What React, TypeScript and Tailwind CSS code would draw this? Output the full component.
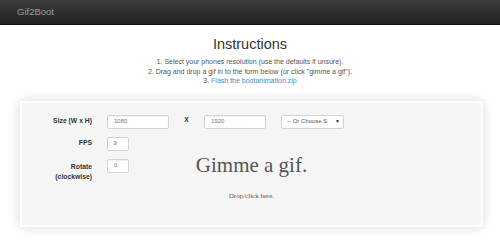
import React from "react";

const sans = { fontFamily: '"Liberation Sans", Arial, sans-serif' };
const serif = { fontFamily: '"Liberation Serif", "Times New Roman", serif' };

function Field({ value, w }: { value: string; w: string }) {
  return (
    <div
      className={`${w} h-[14px] bg-white border border-[#d4d4d4] rounded-[2px] shadow-[inset_0_1px_1px_rgba(0,0,0,0.06)] pl-[6px] overflow-hidden flex items-center text-[6px] text-[#777]`}
    >
      <span className="whitespace-nowrap">{value}</span>
    </div>
  );
}

export default function App() {
  return (
    <div className="w-[500px] h-[247px] bg-white overflow-hidden" style={sans}>
      <header className="h-[25px] bg-gradient-to-b from-[#3c3c3c] to-[#222] border-b border-[#111] flex items-center pl-[17px]">
        <span className="text-[9.5px] text-[#9d9d9d]">Gif2Boot</span>
      </header>

      <div className="flex flex-col items-center mt-[11px]">
        <h1 className="text-[14.5px] leading-[16px] text-[#333]">Instructions</h1>
        <div className="mt-[5px] text-[7px] leading-[9.5px] text-[#555] text-center">
          <p>1. Select your phones resolution (use the defaults if unsure).</p>
          <p>2. Drag and drop a gif in to the form below (or click "gimme a gif").</p>
          <p>
            3. <span className="text-[#428bca]">Flash the bootanimation.zip</span>
          </p>
        </div>
      </div>

      <div className="ml-[20px] mt-[15px] w-[463px] h-[126px] border-2 border-white bg-[#f5f5f5] shadow-[0_0_12px_rgba(0,0,0,0.16)] grid">
        <div className="col-start-1 row-start-1 pt-[12px] flex flex-col gap-[8px]">
          <div className="flex items-center">
            <div className="w-[70px] text-right text-[6.8px] font-bold text-[#333]">Size (W x H)</div>
            <div className="ml-[15px]">
              <Field value="1080" w="w-[62px]" />
            </div>
            <div className="w-[35px] text-center text-[6.8px] font-bold text-[#333] -mt-[3px]">X</div>
            <Field value="1920" w="w-[62px]" />
            <div className="ml-[15px] w-[63px] h-[14px] bg-white border border-[#d4d4d4] rounded-[2px] flex items-center pl-[5px] pr-[3px] text-[6px] text-[#555]">
              <span className="flex-1 whitespace-nowrap overflow-hidden">-- Or Choose S</span>
              <span className="text-[5px] text-[#222]">▼</span>
            </div>
          </div>
          <div className="flex items-center">
            <div className="w-[70px] text-right text-[6.8px] font-bold text-[#333]">FPS</div>
            <div className="ml-[15px] w-[22px] h-[14px] bg-white border border-[#d4d4d4] rounded-[2px] pl-[5px] flex items-center text-[6px] text-[#777]">
              <span className="whitespace-nowrap">3<span className="inline-block w-[1px] overflow-hidden align-bottom">0</span></span>
            </div>
          </div>
          <div className="flex items-start">
            <div className="w-[70px] pt-[3px] text-right text-[6.8px] leading-[10px] font-bold text-[#333]">
              Rotate
              <br />
              (clockwise)
            </div>
            <div className="ml-[15px]">
              <Field value="0" w="w-[22px]" />
            </div>
          </div>
        </div>

        <div className="col-start-1 row-start-1 pt-[50px] flex flex-col items-center" style={serif}>
          <div className="text-[21px] leading-[24px] text-[#555]">Gimme a gif.</div>
          <div className="mt-[14px] text-[7px] leading-[10px] text-[#555]">Drop/click here.</div>
        </div>
      </div>
    </div>
  );
}
